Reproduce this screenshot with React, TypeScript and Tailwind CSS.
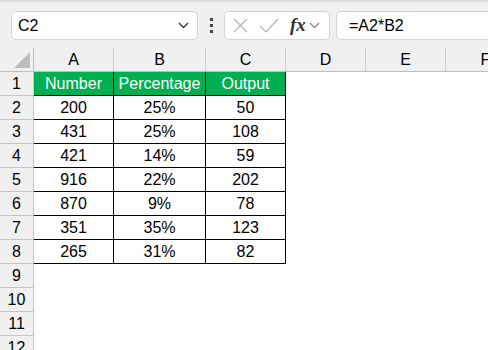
import React from "react";

const COLS = [
  { key: "A", w: "w-[80px]" },
  { key: "B", w: "w-[92px]" },
  { key: "C", w: "w-[80px]" },
  { key: "D", w: "w-[80px]" },
  { key: "E", w: "w-[80px]" },
  { key: "F", w: "w-[80px]" },
];

const ROWS: [string, string, string][] = [
  ["200", "25%", "50"],
  ["431", "25%", "108"],
  ["421", "14%", "59"],
  ["916", "22%", "202"],
  ["870", "9%", "78"],
  ["351", "35%", "123"],
  ["265", "31%", "82"],
];

const font = "font-['Liberation_Sans',Arial,sans-serif]";

function Chevron({ className }: { className: string }) {
  return (
    <svg width="11" height="7" viewBox="0 0 11 7" className={className}>
      <path d="M1 1 L5.5 5.5 L10 1" fill="none" stroke="currentColor" strokeWidth="1.3" />
    </svg>
  );
}

function FormulaBar() {
  return (
    <div className="relative h-[48px] bg-[#f0f0f0] flex items-start pt-[11px]">
      <div className="absolute top-0 left-0 right-0 h-[3px] bg-gradient-to-b from-[#d6d6d6] to-[#f0f0f0]" />
      <div className="ml-[11px] w-[187px] h-[29px] bg-white border border-[#d4d4d4] rounded-[5px] flex items-center pl-[6px] pr-[8px]">
        <span className={`${font} text-[16px] text-black flex-1`}>C2</span>
        <Chevron className="text-[#333]" />
      </div>
      <div className="w-[26px] h-[29px] flex flex-col items-center justify-center gap-[3px]">
        <span className="w-[3px] h-[3px] bg-[#444]" />
        <span className="w-[3px] h-[3px] bg-[#444]" />
        <span className="w-[3px] h-[3px] bg-[#444]" />
      </div>
      <div className="w-[106px] h-[29px] bg-white border border-[#d4d4d4] rounded-[5px] flex items-center pl-[8px]">
        <svg width="15" height="15" viewBox="0 0 15 15">
          <path d="M1 1 L14 14 M14 1 L1 14" stroke="#b4b4b4" strokeWidth="1.2" />
        </svg>
        <svg width="20" height="15" viewBox="0 0 20 15" className="ml-[11px]">
          <path d="M1 8 L7 14 L19 1" fill="none" stroke="#b4b4b4" strokeWidth="1.2" />
        </svg>
        <span className="ml-[11px] font-['Liberation_Serif',serif] italic font-bold text-[19px] leading-none text-[#333] mb-[2px]">
          fx
        </span>
        <Chevron className="ml-[3px] text-[#888]" />
      </div>
      <div className="ml-[6px] flex-1 h-[29px] bg-white border border-r-0 border-[#d4d4d4] rounded-l-[5px] flex items-center pl-[12px]">
        <span className={`${font} text-[16px] text-black`}>=A2*B2</span>
      </div>
    </div>
  );
}

function ColumnHeader() {
  return (
    <div className={`flex h-[24px] bg-[#f0f0f0] border-b border-[#bdbdbd] ${font} text-[16px] text-black`}>
      <div className="w-[34px] shrink-0 border-r border-[#bdbdbd] flex items-end justify-end pr-[3px] pb-[3px]">
        <svg width="16" height="16" viewBox="0 0 16 16">
          <path d="M16 0 L16 16 L0 16 Z" fill="#bdbdbd" />
        </svg>
      </div>
      {COLS.map((c) => (
        <div key={c.key} className={`${c.w} shrink-0 border-r border-[#cdcdcd] flex items-center justify-center`}>
          {c.key}
        </div>
      ))}
    </div>
  );
}

function RowHead({ n }: { n: number }) {
  return (
    <div className="w-[34px] shrink-0 bg-[#f0f0f0] border-r border-b border-[#c4c4c4] flex items-center justify-center">
      {n}
    </div>
  );
}

export default function App() {
  const cell = "shrink-0 border-r border-b border-black flex items-center justify-center";
  return (
    <div className={`w-[488px] h-[350px] overflow-hidden bg-white ${font}`}>
      <FormulaBar />
      <ColumnHeader />
      <div className="text-[16px] text-black">
        <div className="flex h-[24px]">
          <RowHead n={1} />
          <div className={`${cell} w-[80px] bg-[#00b050] text-white`}>Number</div>
          <div className={`${cell} w-[92px] bg-[#00b050] text-white`}>Percentage</div>
          <div className={`${cell} w-[80px] bg-[#00b050] text-white`}>Output</div>
        </div>
        {ROWS.map((r, i) => (
          <div key={i} className="flex h-[24px]">
            <RowHead n={i + 2} />
            <div className={`${cell} w-[80px]`}>{r[0]}</div>
            <div className={`${cell} w-[92px]`}>{r[1]}</div>
            <div className={`${cell} w-[80px]`}>{r[2]}</div>
          </div>
        ))}
        {[9, 10, 11, 12].map((n) => (
          <div key={n} className="flex h-[24px]">
            <RowHead n={n} />
          </div>
        ))}
      </div>
    </div>
  );
}
